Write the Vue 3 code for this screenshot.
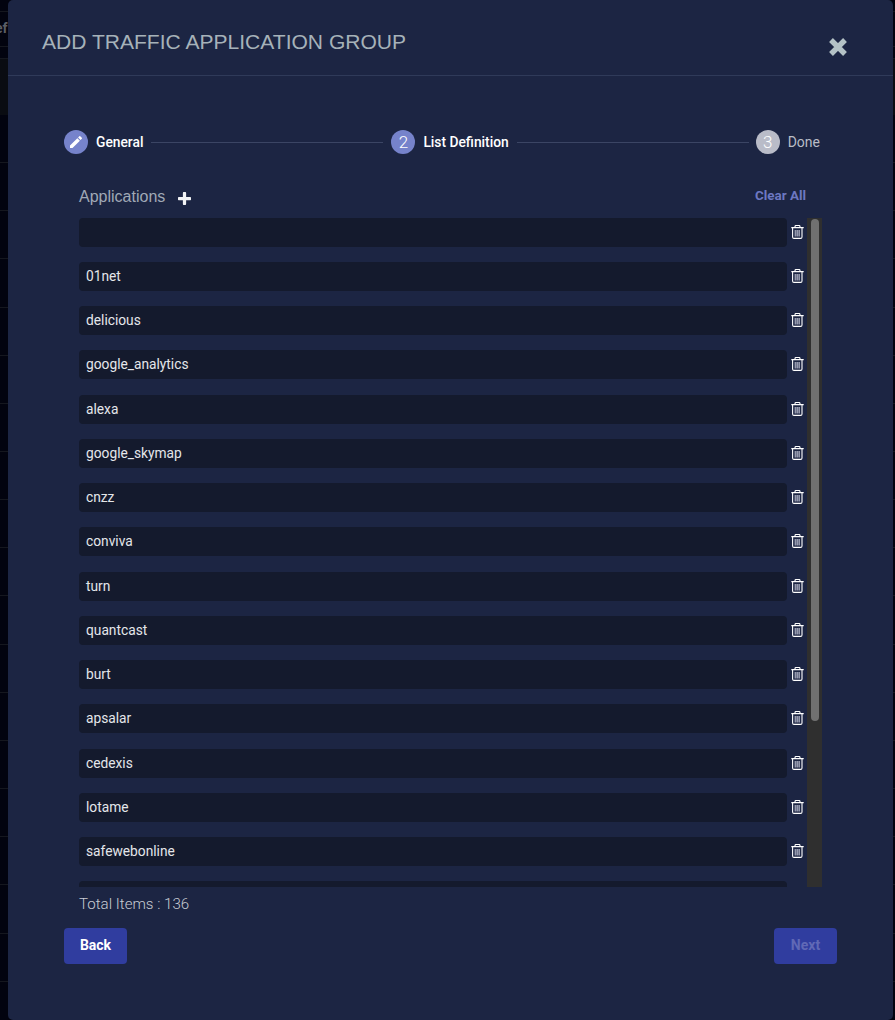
<script setup>
const items = ['', '01net', 'delicious', 'google_analytics', 'alexa', 'google_skymap', 'cnzz', 'conviva', 'turn', 'quantcast', 'burt', 'apsalar', 'cedexis', 'lotame', 'safewebonline', '']
</script>

<template>
  <div class="page">
    <div class="backdrop">
      <div class="bg-top">
        <div class="bg-a"></div>
        <div class="bg-b"></div>
        <div class="bg-c"></div>
        <div class="bg-d"></div>
      </div>
      <div class="bg-rows"></div>
      <div class="bg-text">ef</div>
    </div>
    <div class="modal">
      <div class="modal-header">
        <h2 class="title">ADD TRAFFIC APPLICATION GROUP</h2>
        <svg class="close" viewBox="0 0 20 20" width="20" height="20">
          <path d="M3 3 L17 17 M17 3 L3 17" stroke="#b4c2c6" stroke-width="5.4" stroke-linecap="butt" />
        </svg>
      </div>

      <div class="steps">
        <div class="step active">
          <span class="circle">
            <svg viewBox="0 0 24 24" width="16" height="16">
              <path fill="#fff" d="M3 17.25V21h3.75L17.81 9.94l-3.75-3.75L3 17.25zM20.71 7.04a1 1 0 0 0 0-1.41l-2.34-2.34a1 1 0 0 0-1.41 0l-1.83 1.83 3.75 3.75 1.83-1.83z" />
            </svg>
          </span>
          <span class="step-label">General</span>
        </div>
        <div class="line"></div>
        <div class="step active">
          <span class="circle">2</span>
          <span class="step-label">List Definition</span>
        </div>
        <div class="line second"></div>
        <div class="step">
          <span class="circle grey">3</span>
          <span class="step-label">Done</span>
        </div>
      </div>

      <div class="section">
        <div class="section-head">
          <div class="head-left">
            <span class="section-title">Applications</span>
            <svg viewBox="0 0 12 12" width="13" height="13" class="plus">
              <path d="M6 1.2 V10.8 M1.2 6 H10.8" stroke="#f2f3f5" stroke-width="3" stroke-linecap="round" />
            </svg>
          </div>
          <a class="clear">Clear All</a>
        </div>

        <div class="list-wrap">
          <div class="list">
            <div class="row" v-for="(item, i) in items" :key="i">
              <div class="field">{{ item }}</div>
              <svg class="trash" viewBox="0 0 13 14" width="13" height="14">
                <path d="M4.4 5 V11.6 M6.3 5 V11.6 M8.2 5 V11.6" fill="none" stroke="#9498ad" stroke-width="1.6" />
                <path d="M0.3 2.6 H12.7 M4 2.4 V1.5 Q4 0.5 5 0.5 H8 Q9 0.5 9 1.5 V2.4" fill="none" stroke="#fff" stroke-width="1.1" />
                <path d="M1.6 2.6 V12 Q1.6 13.4 3 13.4 H9.6 Q11 13.4 11 12 V2.6" fill="none" stroke="#fff" stroke-width="1.1" />
              </svg>
            </div>
          </div>
          <div class="track"><div class="thumb"></div></div>
        </div>

        <div class="total">Total Items : 136</div>
      </div>

      <div class="footer">
        <button class="btn">Back</button>
        <button class="btn disabled">Next</button>
      </div>
    </div>
  </div>
</template>

<style scoped>
.page {
  position: relative;
  height: 1020px;
  width: 895px;
  overflow: hidden;
  background: #02030f;
  font-family: Roboto, 'Liberation Sans', sans-serif;
}

.backdrop {
  position: absolute;
  inset: 0;
}

.bg-top {
  height: 115px;
}

.bg-a {
  height: 11px;
  border-bottom: 1px solid #15171f;
}

.bg-b {
  height: 34px;
  border-bottom: 1px solid #15171f;
}

.bg-c {
  height: 11px;
  border-bottom: 1px solid #15171f;
}

.bg-d {
  height: 56px;
  background: #0a0c12;
  border-bottom: 1px solid #15171f;
}

.bg-rows {
  height: 905px;
  background: repeating-linear-gradient(to bottom, #02030f 0, #02030f 47.15px, #15171f 47.15px, #15171f 48.15px);
}

.bg-text {
  position: absolute;
  left: -5px;
  top: 20px;
  font-size: 14px;
  font-weight: 700;
  color: #5b5e66;
}

.modal {
  position: relative;
  margin-left: 8px;
  width: 885px;
  height: 1020px;
  box-sizing: border-box;
  background: #1c2543;
  border-radius: 5px;
}

.modal-header {
  display: flex;
  justify-content: space-between;
  height: 76px;
  box-sizing: border-box;
  padding: 28px 45px 0 34px;
  border-bottom: 1px solid #2f3a59;
}

.title {
  margin: 0;
  font-family: 'Liberation Sans', sans-serif;
  font-weight: 400;
  font-size: 21.05px;
  line-height: 28px;
  color: #a6b2b9;
}

.close {
  margin-top: 9px;
}

.steps {
  display: flex;
  align-items: center;
  margin-top: 54px;
  padding: 0 73px 0 56px;
  height: 24px;
}

.step {
  display: flex;
  align-items: center;
  gap: 8px;
  font-size: 14px;
  color: #b9bdc6;
}

.step.active {
  color: #fff;
  font-weight: 500;
  font-size: 13.8px;
}

.circle {
  display: flex;
  align-items: center;
  justify-content: center;
  width: 24px;
  height: 24px;
  border-radius: 50%;
  background: #7683cb;
  color: #fff;
  font-size: 17px;
  font-weight: 300;
}

.circle.grey {
  background: #b9bcc8;
}

.line {
  flex: 1;
  height: 1px;
  margin: 0 8px;
  background: #3b4564;
}

.line.second {
  margin-right: 7px;
}

.section {
  padding: 0 71px 0 71px;
}

.section-head {
  display: flex;
  justify-content: space-between;
  align-items: center;
  margin-top: 27px;
  margin-bottom: 5.5px;
  height: 31px;
  padding-right: 16px;
}

.head-left {
  display: flex;
  align-items: center;
  gap: 13px;
}

.section-title {
  font-family: 'Liberation Sans', sans-serif;
  font-size: 16px;
  color: #a0a9b6;
}

.plus {
  margin-top: 3px;
}

.clear {
  font-size: 13.4px;
  font-weight: 700;
  color: #6d78c2;
  margin-top: -2px;
}

.list-wrap {
  display: flex;
  height: 669.5px;
  overflow: hidden;
}

.list {
  width: 728px;
  display: flex;
  flex-direction: column;
  gap: 15.25px;
  overflow: hidden;
}

.row {
  display: flex;
  align-items: flex-start;
  flex-shrink: 0;
}

.field {
  width: 708px;
  height: 29px;
  box-sizing: border-box;
  padding-left: 7px;
  background: #141a2d;
  border-radius: 4px;
  font-size: 13.75px;
  line-height: 29px;
  color: #e4e6ea;
}

.trash {
  margin: 7px 0 0 4px;
}

.track {
  width: 15px;
  height: 100%;
  background: #2f2f2f;
}

.thumb {
  width: 8px;
  height: 502px;
  margin: 1px auto 0;
  background: #707070;
  border-radius: 4px;
}

.total {
  margin-top: 7px;
  font-size: 15.1px;
  font-weight: 300;
  line-height: 20px;
  color: #c8ccd4;
}

.footer {
  display: flex;
  justify-content: space-between;
  padding: 14px 56px 0;
}

.btn {
  width: 63px;
  height: 36px;
  border: 0;
  border-radius: 4px;
  padding: 0 0 2px;
  background: #303d9f;
  color: #fff;
  font-family: Roboto, sans-serif;
  font-size: 14px;
  font-weight: 700;
}

.btn.disabled {
  color: #6069b6;
}
</style>

<style>
html, body {
  background: #02030f;
}
</style>
